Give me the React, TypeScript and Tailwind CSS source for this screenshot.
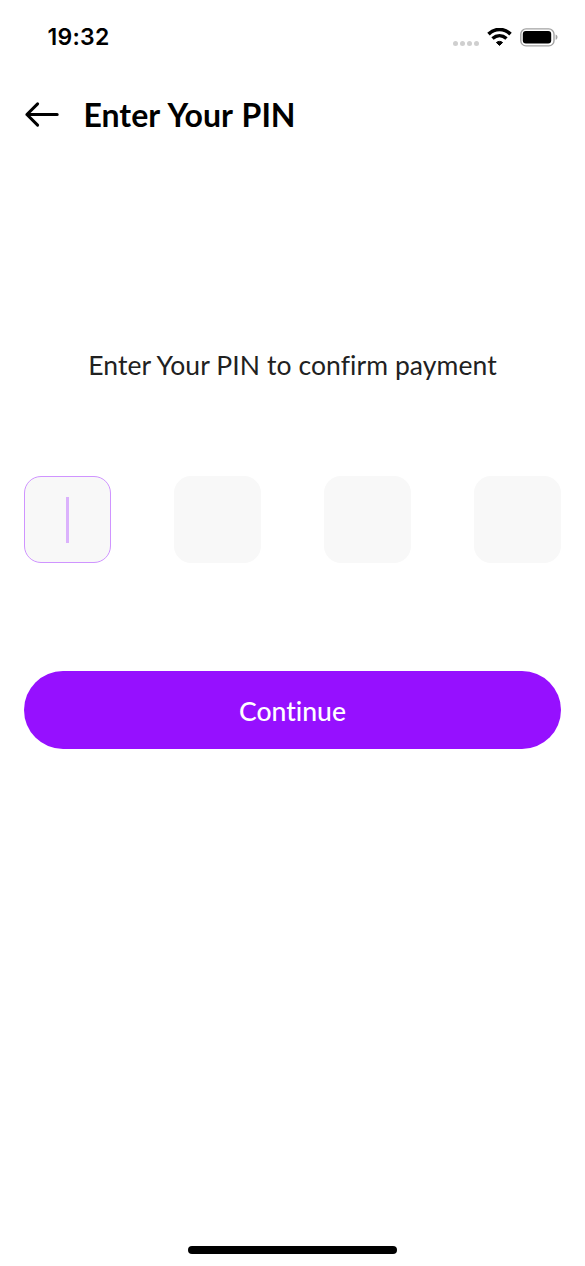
import React from 'react';
import { clsx } from 'clsx';

const PIN_LENGTH = 4;

const StatusBar = () => (
  <div className="flex h-[74px] items-center justify-between pl-[47.5px] pr-[27px]">
    <span className="pt-px font-['Inter',sans-serif] text-[23px] leading-none font-semibold tracking-[0.25px] text-black">
      19:32
    </span>

    <div className="flex items-center">
      {/* Cellular dots */}
      <div className="mt-3 flex gap-[2px]">
        {[0, 1, 2, 3].map((dot) => (
          <span key={dot} className="size-[5px] rounded-full bg-[#cfcfcf]" />
        ))}
      </div>

      {/* Wifi */}
      <svg className="ml-[8px]" width="25" height="19" viewBox="0 0 25 19" fill="none">
        <path d="M1.5 6.1C8 -0.1 17 -0.1 23.5 6.1" stroke="black" strokeWidth="3.6" />
        <path d="M5.5 10.6C9.8 6.7 15.2 6.7 19.5 10.6" stroke="black" strokeWidth="3.4" />
        <path
          d="M12.5 17.4L9.4 14.5C11.1 13 13.9 13 15.6 14.5Z"
          fill="black"
          stroke="black"
          strokeWidth="1"
          strokeLinejoin="round"
        />
      </svg>

      {/* Battery */}
      <svg className="ml-[8px]" width="38" height="19" viewBox="0 0 38 19" fill="none">
        <rect x="0.8" y="0.9" width="33.2" height="17" rx="5.2" stroke="#a3a3a3" strokeWidth="1.4" />
        <rect x="2.8" y="3" width="28.4" height="12.4" rx="3" fill="black" />
        <path d="M35.6 6.6C38.1 7.5 38.1 10.9 35.6 11.8Z" fill="#a3a3a3" />
      </svg>
    </div>
  </div>
);

interface PinBoxProps {
  focused?: boolean;
}

const PinBox = ({ focused }: PinBoxProps) => (
  <div
    className={clsx(
      'flex size-[87px] items-center justify-center rounded-[17px] border bg-[#f8f8f8]',
      focused ? 'border-[#cf94ff]' : 'border-[#f8f8f8]'
    )}
  >
    {focused && <span className="h-[46px] w-[3px] bg-[#dbb2fc]" />}
  </div>
);

export default function App() {
  return (
    <div className="flex h-[1266px] w-[585px] flex-col bg-white font-['Lato',sans-serif] [font-variant-ligatures:none]">
      <StatusBar />

      <header className="flex h-[82px] items-center px-6">
        <button type="button" aria-label="Back">
          <svg width="36" height="28" viewBox="0 0 36 28" fill="none">
            <path
              d="M13.6 2.9L2.9 13.5L13.6 24.1M2.9 13.5H33.2"
              stroke="black"
              strokeWidth="3"
              strokeLinecap="round"
              strokeLinejoin="round"
            />
          </svg>
        </button>
        <h1 className="ml-[23.5px] text-[32px] leading-10 font-bold whitespace-nowrap text-black [word-spacing:1.5px]">
          Enter Your PIN
        </h1>
      </header>

      <main className="px-6">
        <p className="mt-[189px] text-center text-[26.5px] leading-10 tracking-[0.08px] whitespace-nowrap text-[#212121]">
          Enter Your PIN to confirm payment
        </p>

        <div className="mt-[91px] flex justify-between">
          {Array.from({ length: PIN_LENGTH }, (_, index) => (
            <PinBox key={index} focused={index === 0} />
          ))}
        </div>

        <button
          type="button"
          className="mt-[108px] flex h-[78px] w-full items-center justify-center rounded-full bg-[#9610ff] pt-[3px] text-[26.5px] font-medium text-white"
        >
          Continue
        </button>
      </main>

      {/* Home indicator */}
      <div className="mx-auto mt-auto mb-3 h-2 w-[209px] rounded-full bg-black" />
    </div>
  );
}
